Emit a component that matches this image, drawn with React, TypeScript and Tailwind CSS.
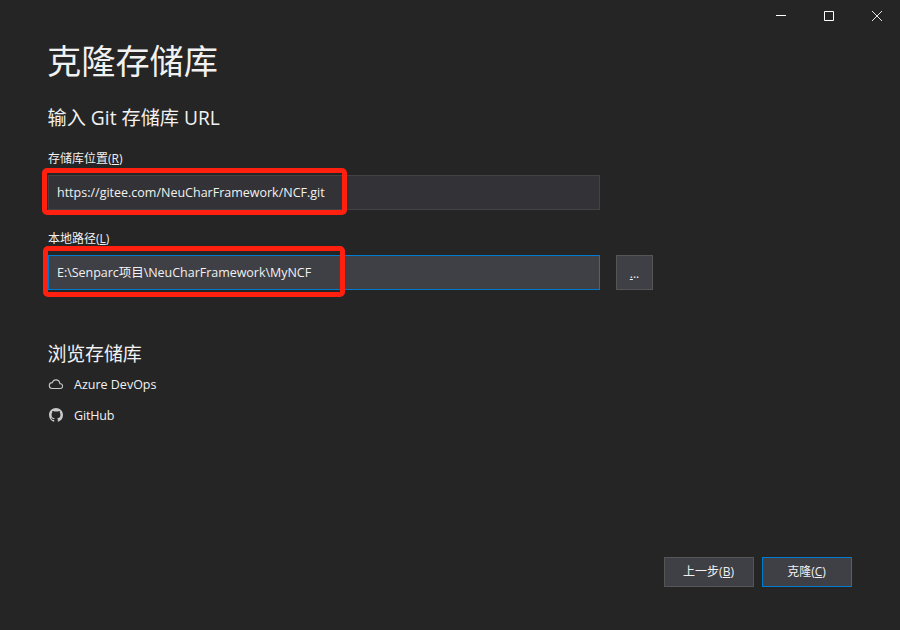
import type { ReactNode } from 'react';

const Key = ({ children }: { children: ReactNode }) => (
  <>
    (<span className="underline decoration-1 underline-offset-1">{children}</span>)
  </>
);

function Mark({ className }: { className: string }) {
  return <div className={`pointer-events-none absolute rounded-[5px] border-5 border-[#ff2010] ${className}`} />;
}

function TitleBar() {
  return (
    <div className="-mr-px flex h-8 justify-end text-white">
      <button className="flex h-8 w-12 items-center justify-center">
        <svg width="10" height="10" viewBox="0 0 10 10" shapeRendering="crispEdges">
          <path d="M0 4h10v1H0z" fill="#fff" />
        </svg>
      </button>
      <button className="flex h-8 w-12 items-center justify-center">
        <svg width="10" height="10" viewBox="0 0 10 10">
          <path d="M.5.5h9v9h-9z" fill="none" stroke="#fff" />
        </svg>
      </button>
      <button className="flex h-8 w-12 items-center justify-center">
        <svg width="10" height="10" viewBox="0 0 10 10">
          <path d="M0 0L10 10M10 0L0 10" fill="none" stroke="#e4e4e4" />
        </svg>
      </button>
    </div>
  );
}

export default function App() {
  return (
    <div className="flex h-[630px] w-[900px] flex-col overflow-hidden bg-[#252526] font-['Open_Sans','Noto_Sans_CJK_SC',sans-serif] text-[12.5px] text-[#f1f1f1]">
      <TitleBar />
      <main className="flex flex-1 flex-col px-12 whitespace-nowrap">
        <h1 className="mt-[5px] -ml-px h-12 text-[34.2px] leading-[48px]">克隆存储库</h1>
        <h2 className="mt-[19px] -ml-px h-7 pl-[0.5px] text-[19.2px] leading-7">输入 Git 存储库 URL</h2>
        <label className="mt-[19px] h-4 text-[12px] leading-4">存储库位置<Key>R</Key></label>
        <div className="relative mt-2 flex h-[35px] w-[552px] items-center border border-[#434346] bg-[#333337] px-2">
          <span className="pt-0.5">https://gitee.com/NeuCharFramework/NCF.git</span>
          <Mark className="-top-2 -left-[7px] h-[47px] w-[305px]" />
        </div>
        <label className="mt-[21px] h-4 text-[12px] leading-4">本地路径<Key>L</Key></label>
        <div className="mt-2 flex gap-4">
          <div className="relative flex h-[35px] w-[552px] items-center border border-[#007acc] bg-[#3f3f46] px-2">
            <span className="pt-0.5 tracking-[-0.03px]">E:\Senparc项目\NeuCharFramework\MyNCF</span>
            <Mark className="-top-2.5 -left-1.5 h-[51px] w-[302px]" />
          </div>
          <button className="flex h-[35px] w-[37px] items-center justify-center border border-[#555555] bg-[#3f3f46]">
            <span className="pt-0.5 text-[12px]"><span className="underline underline-offset-1">.</span>..</span>
          </button>
        </div>
        <h2 className="mt-[50px] -ml-px h-7 pl-[0.5px] text-[19px] leading-7 tracking-[-0.2px]">浏览存储库</h2>
        <div className="mt-[7px] flex h-5 items-center gap-[11px]">
          <svg className="-mt-0.5" width="15" height="15" viewBox="0 0 15 15">
            <path d="M4 11.500h8.100a2.350 2.350 0 0 0 .3-4.700h-.5C11.600 4.500 10 2.900 7.900 2.900 6.200 2.900 4.900 4 4.300 5.600 2.600 5.600 1.300 6.800 1.300 8.500s1.100 3 2.700 3z" fill="none" stroke="#c8c8c8" strokeWidth="1.1" />
          </svg>
          <span>Azure DevOps</span>
        </div>
        <div className="mt-[11px] flex h-5 items-center gap-[11px]">
          <svg className="-mt-0.5 ml-px" width="14" height="14" viewBox="0 0 16 16">
            <path fill="#c8c8c8" d="M8 0C3.58 0 0 3.58 0 8c0 3.54 2.29 6.53 5.47 7.59.4.07.55-.17.55-.38 0-.19-.01-.82-.01-1.49-2.01.37-2.53-.49-2.69-.94-.09-.23-.48-.94-.82-1.13-.28-.15-.68-.52-.01-.53.63-.01 1.08.58 1.23.82.72 1.21 1.87.87 2.33.66.07-.52.28-.87.51-1.07-1.78-.2-3.64-.89-3.64-3.95 0-.87.31-1.59.82-2.15-.08-.2-.36-1.02.08-2.12 0 0 .67-.21 2.2.82.64-.18 1.32-.27 2-.27s1.36.09 2 .27c1.53-1.04 2.2-.82 2.2-.82.44 1.1.16 1.92.08 2.12.51.56.82 1.27.82 2.15 0 3.07-1.87 3.75-3.65 3.95.29.25.54.73.54 1.48 0 1.07-.01 1.93-.01 2.2 0 .21.15.46.55.38A8.01 8.01 0 0 0 16 8c0-4.42-3.58-8-8-8z" />
          </svg>
          <span className="tracking-[-0.15px]">GitHub</span>
        </div>
        <footer className="mt-auto mb-[43px] flex justify-end gap-2 text-[12px]">
          <button className="h-[30px] w-[90px] border border-[#555555] bg-[#3f3f46] pr-px">上一步<Key>B</Key></button>
          <button className="h-[30px] w-[90px] border border-[#007acc] bg-[#3f3f46] pr-px">克隆<Key>C</Key></button>
        </footer>
      </main>
    </div>
  );
}
